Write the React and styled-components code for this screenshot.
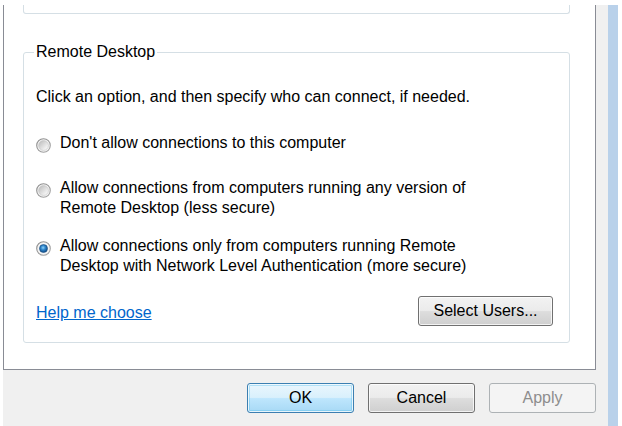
import React from "react";
import styled, { createGlobalStyle, css } from "styled-components";

const GlobalStyle = createGlobalStyle`
  html, body {
    margin: 0;
    padding: 0;
    background: #ffffff;
  }
  body {
    font-family: "Liberation Sans", Arial, sans-serif;
    font-size: 16px;
    color: #000000;
  }
  *, *::before, *::after {
    box-sizing: border-box;
  }
`;

const Screen = styled.div`
  display: flex;
  width: 622px;
  height: 426px;
  padding: 5px 4px 0 3px;
  overflow: hidden;
`;

const Dialog = styled.div`
  flex: 1;
  display: flex;
  flex-direction: column;
  background: #f0f0f0;
  padding-right: 12px;
`;

const WindowEdge = styled.div`
  flex: none;
  width: 10px;
  background: #b9d1ea;
`;

const TabPage = styled.div`
  background: #ffffff;
  border: 1px solid #898c95;
  border-top: none;
  padding: 0 25px 26px 19px;
`;

/* bottom edge of the group box scrolled above this section */
const GroupTail = styled.div`
  height: 9px;
  border: 1px solid #d5dfe5;
  border-top: none;
  border-radius: 0 0 3px 3px;
`;

const GroupBox = styled.fieldset`
  margin: 29px 0 0;
  padding: 26px 16px 16px 12px;
  border: 1px solid #d5dfe5;
  border-radius: 3px;
  min-width: 0;
`;

const Legend = styled.legend`
  padding: 0 2px;
  margin-left: -2px;
  line-height: 18px;
`;

const Intro = styled.p`
  margin: 0;
  line-height: 20px;
`;

const Option = styled.label`
  display: flex;
  align-items: flex-start;
  margin-top: ${(p) => p.$gap}px;
  line-height: 20px;
  cursor: default;
`;

const RadioMark = styled.svg`
  flex: none;
  width: 15px;
  height: 15px;
  margin-top: 5px;
`;

const OptionText = styled.span`
  margin-left: 9px;
`;

const ActionRow = styled.div`
  display: flex;
  align-items: center;
  justify-content: space-between;
  margin-top: 20px;
`;

const HelpLink = styled.a`
  color: #0066cc;
  text-decoration: underline;
  line-height: 20px;
  margin-top: 4px;
`;

const buttonLook = {
  normal: css`
    color: #000000;
    border-color: #707070;
    background: linear-gradient(#f2f2f2 0%, #ebebeb 48%, #dddddd 52%, #cfcfcf 100%);
    box-shadow: inset 0 0 0 1px rgba(255, 255, 255, 0.75);
  `,
  primary: css`
    color: #000000;
    border-color: #3c7fb1;
    background: linear-gradient(#eaf6fd 0%, #d9f0fc 48%, #bee6fd 52%, #a7d9f5 100%);
    box-shadow: inset 0 0 0 1px rgba(255, 255, 255, 0.8), inset 0 0 0 2px rgba(72, 186, 235, 0.35);
  `,
  disabled: css`
    color: #8d8d8d;
    border-color: #adb2b5;
    background: #f4f4f4;
  `,
};

const Button = styled.button`
  flex: none;
  width: ${(p) => p.$width}px;
  height: 30px;
  padding: 0;
  font-family: inherit;
  font-size: 16px;
  line-height: 28px;
  border: 1px solid;
  border-radius: 3px;
  ${(p) => buttonLook[p.$look || "normal"]}
`;

const Footer = styled.div`
  display: flex;
  justify-content: flex-end;
  gap: 14px;
  margin-top: 13px;
`;

function Radio({ checked, id }) {
  return (
    <RadioMark viewBox="0 0 15 15" aria-hidden="true">
      <defs>
        <linearGradient id={`${id}-ring`} x1="0" y1="0" x2="1" y2="1">
          <stop offset="0" stopColor="#8a8a8a" />
          <stop offset="1" stopColor="#a9a9a9" />
        </linearGradient>
        <linearGradient id={`${id}-well`} x1="0.15" y1="0.15" x2="0.85" y2="0.85">
          <stop offset="0" stopColor="#c4c4c4" />
          <stop offset="1" stopColor="#f8f8f8" />
        </linearGradient>
        <radialGradient id={`${id}-dot`} cx="0.45" cy="0.4" r="0.6">
          <stop offset="0" stopColor="#8fd3f8" />
          <stop offset="0.45" stopColor="#2f86cc" />
          <stop offset="1" stopColor="#0f4a86" />
        </radialGradient>
      </defs>
      <circle cx="7.5" cy="7.5" r="6.8" fill="#f4f4f4" stroke={`url(#${id}-ring)`} strokeWidth="1.1" />
      {checked ? (
        <circle cx="7.5" cy="7.5" r="4" fill={`url(#${id}-dot)`} stroke="#1b4f82" strokeWidth="0.6" />
      ) : (
        <circle cx="7.5" cy="7.5" r="4.9" fill={`url(#${id}-well)`} stroke="#bdbdbd" strokeWidth="0.5" />
      )}
    </RadioMark>
  );
}

const options = [
  { id: "rd-none", gap: 26, lines: ["Don't allow connections to this computer"] },
  {
    id: "rd-any",
    gap: 25,
    lines: ["Allow connections from computers running any version of", "Remote Desktop (less secure)"],
  },
  {
    id: "rd-nla",
    gap: 18,
    checked: true,
    lines: [
      "Allow connections only from computers running Remote",
      "Desktop with Network Level Authentication (more secure)",
    ],
  },
];

export default function App() {
  return (
    <>
      <GlobalStyle />
      <Screen>
        <Dialog>
          <TabPage>
            <GroupTail />
            <GroupBox>
              <Legend>Remote Desktop</Legend>
              <Intro>Click an option, and then specify who can connect, if needed.</Intro>
              {options.map((o) => (
                <Option key={o.id} $gap={o.gap}>
                  <Radio id={o.id} checked={o.checked} />
                  <OptionText>
                    {o.lines.map((line, i) => (
                      <React.Fragment key={i}>
                        {i > 0 && <br />}
                        {line}
                      </React.Fragment>
                    ))}
                  </OptionText>
                </Option>
              ))}
              <ActionRow>
                <HelpLink href="#">Help me choose</HelpLink>
                <Button $width={135}>Select Users...</Button>
              </ActionRow>
            </GroupBox>
          </TabPage>
          <Footer>
            <Button $width={107} $look="primary">OK</Button>
            <Button $width={107}>Cancel</Button>
            <Button $width={107} $look="disabled" disabled>Apply</Button>
          </Footer>
        </Dialog>
        <WindowEdge />
      </Screen>
    </>
  );
}
